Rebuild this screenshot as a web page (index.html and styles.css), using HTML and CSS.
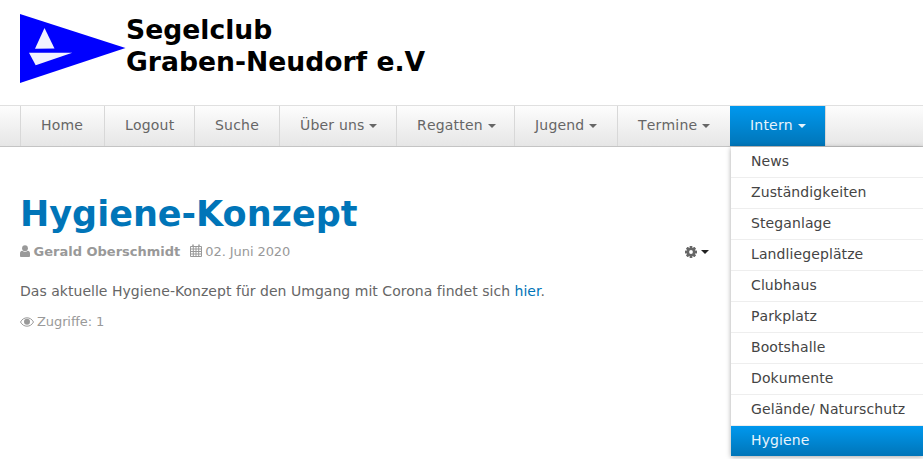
FILE: index.html
```html
<!DOCTYPE html>
<html lang="de">
    <head>
        <meta charset="UTF-8">
        <meta name="viewport" content="width=device-width, initial-scale=1.0">
        <title>Hygiene-Konzept</title>
        <link rel="stylesheet" href="styles.css">
    </head>
    <body>
        <header class="site-header">
            <svg class="logo" width="106" height="69" viewBox="0 0 106 69">
                <polygon points="0,0 105.500,34 0,69" fill="#0000ff"/>
                <polygon points="24.500,14 34.500,34.500 15,34.800" fill="#f2f2ff"/>
                <polygon points="9,38.700 52.300,38.700 15.700,51.300" fill="#f2f2ff"/>
            </svg>
            <div class="site-name">Segelclub<br>Graben-Neudorf e.V</div>
        </header>

        <nav class="navbar">
            <ul class="nav">
                <li><a href="#">Home</a></li>
                <li><a href="#">Logout</a></li>
                <li><a href="#">Suche</a></li>
                <li><a href="#">Über uns <span class="caret"></span></a></li>
                <li><a href="#">Regatten <span class="caret"></span></a></li>
                <li><a href="#">Jugend <span class="caret"></span></a></li>
                <li><a href="#">Termine <span class="caret"></span></a></li>
                <li class="active">
                    <a href="#">Intern <span class="caret"></span></a>
                    <ul class="dropdown">
                        <li><a href="#">News</a></li>
                        <li><a href="#">Zuständigkeiten</a></li>
                        <li><a href="#">Steganlage</a></li>
                        <li><a href="#">Landliegeplätze</a></li>
                        <li><a href="#">Clubhaus</a></li>
                        <li><a href="#">Parkplatz</a></li>
                        <li><a href="#">Bootshalle</a></li>
                        <li><a href="#">Dokumente</a></li>
                        <li><a href="#">Gelände/ Naturschutz</a></li>
                        <li class="current"><a href="#">Hygiene</a></li>
                    </ul>
                </li>
            </ul>
        </nav>

        <main class="article">
            <h1>Hygiene-Konzept</h1>
            <div class="meta">
                <div class="meta-left">
                    <span class="author">
                        <svg class="icon" width="10" height="12" viewBox="0 0 10 12"><circle cx="5" cy="3.200" r="2.900" fill="#999"/><path d="M0 11V8.500C0 6.800 1 6 2.200 5.800C3 6.500 4 6.800 5 6.800C6 6.800 7 6.500 7.800 5.800C9 6 10 6.800 10 8.500V11C10 11.500 9.500 12 9 12H1C0.500 12 0 11.500 0 11Z" fill="#999"/></svg>
                        Gerald Oberschmidt
                    </span>
                    <span class="date">
                        <svg class="icon" width="12" height="13" viewBox="0 0 12 13"><path d="M0.500 2.500H11.500V12.500H0.500ZM0.500 5H11.500M0.500 7.500H11.500M0.500 10H11.500M3.300 2.500V12.500M6 2.500V12.500M8.700 2.500V12.500" fill="none" stroke="#999" stroke-width="1"/><path d="M3 0.500V3M9 0.500V3" stroke="#999" stroke-width="1.500"/></svg>
                        02. Juni 2020
                    </span>
                </div>
                <span class="tools">
                    <svg width="12" height="12" viewBox="0 0 12 12">
                        <g fill="#666">
                            <rect x="4.600" y="0" width="2.800" height="12" rx="0.500"/>
                            <rect x="4.600" y="0" width="2.800" height="12" rx="0.500" transform="rotate(45 6 6)"/>
                            <rect x="4.600" y="0" width="2.800" height="12" rx="0.500" transform="rotate(90 6 6)"/>
                            <rect x="4.600" y="0" width="2.800" height="12" rx="0.500" transform="rotate(135 6 6)"/>
                        </g>
                        <circle cx="6" cy="6" r="3.300" fill="none" stroke="#666" stroke-width="2"/>
                        <circle cx="6" cy="6" r="1.900" fill="#fff"/>
                    </svg>
                    <span class="caret caret-dark"></span>
                </span>
            </div>
            <p>Das aktuelle Hygiene-Konzept für den Umgang mit Corona findet sich <a href="#">hier</a>.</p>
            <div class="hits">
                <svg class="icon" width="14" height="10" viewBox="0 0 14 10"><path d="M0.500 5C2 2.200 4.300 0.800 7 0.800C9.700 0.800 12 2.200 13.500 5C12 7.800 9.700 9.200 7 9.200C4.300 9.200 2 7.800 0.500 5Z" fill="none" stroke="#999" stroke-width="1"/><circle cx="7" cy="4.800" r="3" fill="#999"/></svg>
                Zugriffe: 1
            </div>
        </main>
    </body>
</html>
```

FILE: styles.css
```css
html, body {
    height: 100%;
}
body {
    margin: 0;
    font-family: "DejaVu Sans", sans-serif;
    font-size: 13px;
    line-height: 18px;
    color: #666;
    background-color: white;
}
a {
    text-decoration: none;
}
ul {
    list-style: none;
    margin: 0;
    padding: 0;
}
.site-header {
    height: 105px;
    padding: 14px 20px 0;
    box-sizing: border-box;
    display: flex;
    align-items: flex-start;
}
.logo {
    display: block;
    flex: none;
}
.site-name {
    font-size: 26.600px;
    line-height: 32px;
    font-weight: bold;
    color: black;
}
.navbar {
    height: 42px;
    box-sizing: border-box;
    padding: 0 20px;
    font-size: 14px;
    font-kerning: none;
    letter-spacing: 0.200px;
    background: linear-gradient(#fdfdfd, #e6e6e6);
    border-top: 1px solid #e0e0e0;
    border-bottom: 1px solid #c4c4c4;
}
.nav {
    display: grid;
    grid-template-columns: 84px 90px 85px 117px 118px 103px 113px 96px;
}
.nav > li {
    position: relative;
    box-sizing: border-box;
    border-left: 1px solid #d8d8d8;
}
.nav > li > a {
    display: block;
    height: 40px;
    line-height: 39px;
    padding: 0 0 0 20px;
    color: #666;
}
.caret {
    display: inline-block;
    width: 0;
    height: 0;
    vertical-align: middle;
    border-top: 4px solid #666;
    border-left: 4px solid transparent;
    border-right: 4px solid transparent;
}
.caret-dark {
    border-top-color: #222;
}
.nav > .active {
    border-left: none;
    border-right: 1px solid #d8d8d8;
}
.nav > .active > a {
    color: #e8f4fc;
    background: linear-gradient(#0098ee, #0075b8);
}
.nav > .active .caret {
    border-top-color: #e8f4fc;
}
.dropdown {
    position: absolute;
    top: 41px;
    left: 1px;
    width: 192px;
    background-color: white;
    letter-spacing: 0.100px;
    box-shadow: 0 1px 5px rgba(0, 0, 0, 0.35);
}
.dropdown li {
    border-bottom: 1px solid #eee;
}
.dropdown a {
    display: block;
    height: 30px;
    line-height: 29px;
    padding: 0 20px;
    color: #444;
    white-space: nowrap;
}
.dropdown .current {
    border-bottom: none;
}
.dropdown .current a {
    color: #e8f4fc;
    background: linear-gradient(#0098ee, #0075b8);
}
.article {
    width: 689px;
    padding: 0 20px;
}
h1 {
    margin: 46px 0 0;
    font-size: 35px;
    line-height: 42px;
    font-weight: bold;
    color: #0075b8;
}
.meta {
    display: flex;
    justify-content: space-between;
    align-items: center;
    margin-top: 8px;
    color: #999;
}
.meta-left {
    display: flex;
    gap: 10px;
}
.author {
    font-weight: bold;
}
.date {
    letter-spacing: -0.080px;
}
.tools {
    display: flex;
    align-items: center;
    gap: 4px;
}
.icon {
    vertical-align: -1px;
    margin-right: -1px;
}
p {
    margin: 20px 0 0;
    font-size: 14px;
    line-height: 20px;
    letter-spacing: 0.030px;
}
p a {
    color: #0075b8;
}
.hits {
    margin-top: 12px;
    color: #999;
    letter-spacing: -0.100px;
}
```
